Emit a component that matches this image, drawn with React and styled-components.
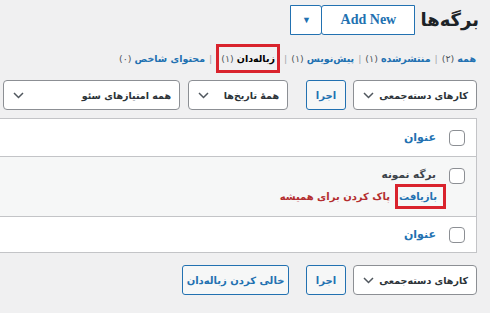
import React from 'react';
import styled, { createGlobalStyle } from 'styled-components';

const GlobalStyle = createGlobalStyle`
    html, body {
        margin: 0;
        padding: 0;
        background: #f0f0f1;
    }
    body {
        direction: rtl;
        font-family: "DejaVu Sans", sans-serif;
        font-size: 11px;
        color: #3c434a;
        overflow: hidden;
    }
`;

const Wrap = styled.div`
    width: 490px;
    height: 313px;
    padding: 5px 13px 0 0;
    box-sizing: border-box;
`;

const HeadRow = styled.div`
    display: flex;
    align-items: center;
    gap: 5px;
    height: 30px;
`;

const Title = styled.h1`
    margin: 0 -2px 0 0;
    font-size: 18px;
    font-weight: bold;
    color: #1d2327;
    line-height: 30px;
`;

const SplitButton = styled.div`
    display: flex;
    height: 30px;
`;

const AddNew = styled.button`
    width: 94px;
    height: 30px;
    box-sizing: border-box;
    border: 1px solid #2271b1;
    border-radius: 3px 0 0 3px;
    background: #fff;
    color: #2271b1;
    font-family: "Liberation Serif", serif;
    font-weight: bold;
    font-size: 14px;
    direction: ltr;
    padding: 0;
    text-align: center;
`;

const Toggle = styled.button`
    width: 32px;
    height: 30px;
    box-sizing: border-box;
    border: 1px solid #2271b1;
    border-radius: 0 3px 3px 0;
    margin-right: -1px;
    background: #fff;
    color: #2271b1;
    font-size: 9px;
    padding: 0;
    display: flex;
    align-items: center;
    justify-content: center;
`;

const Views = styled.ul`
    list-style: none;
    margin: 9px 1px 0 0;
    padding: 0;
    display: flex;
    align-items: center;
    height: 28px;
    font-size: 9.5px;
`;

const ViewItem = styled.li`
    display: flex;
    align-items: center;
    white-space: nowrap;
`;

const ViewLink = styled.span`
    color: ${p => (p.$current ? '#000' : '#2271b1')};
    font-weight: bold;
    display: inline-flex;
    align-items: center;
    ${p => p.$current && `
        border: 3px solid #d9232d;
        padding: 0 2px 0 2px;
        height: 23px;
    `}
`;

const Count = styled.span`
    color: #50575e;
    font-weight: normal;
    margin-right: 3px;
`;

const Sep = styled.span`
    color: #a7aaad;
    font-weight: normal;
    margin: 0 4px;
`;

const TableNav = styled.div`
    display: flex;
    align-items: center;
    height: 30px;
    margin-top: ${p => p.$top}px;
`;

const Select = styled.div`
    flex: none;
    width: ${p => p.$w}px;
    height: 30px;
    box-sizing: border-box;
    border: 1px solid #8c8f94;
    border-radius: 4px;
    background: #fff;
    display: flex;
    align-items: center;
    justify-content: space-between;
    padding: 0 8px 0 9px;
    margin-left: ${p => p.$ml || 0}px;
    font-size: 9.5px;
    font-weight: bold;
    color: #2c3338;
    white-space: nowrap;
    overflow: hidden;
`;

const Button = styled.button`
    flex: none;
    height: 30px;
    box-sizing: border-box;
    border: 1px solid #2271b1;
    border-radius: 3px;
    background: #f6f7f7;
    color: #2271b1;
    font-family: "DejaVu Sans", sans-serif;
    font-size: 10px;
    font-weight: bold;
    padding: 0;
    width: ${p => p.$w}px;
    margin-left: ${p => p.$ml || 0}px;
    white-space: nowrap;
`;

const Table = styled.div`
    margin-top: 8px;
    margin-left: -2px;
    width: 479px;
    box-sizing: border-box;
    border: 1px solid #c3c4c7;
    border-left: 0;
    background: #fff;
`;

const Row = styled.div`
    display: flex;
    align-items: ${p => (p.$tall ? 'flex-start' : 'center')};
    height: ${p => p.$h}px;
    box-sizing: border-box;
    border-top: ${p => (p.$first ? '0' : '1px solid #c3c4c7')};
    background: ${p => (p.$alt ? '#f6f7f7' : '#fff')};
    padding-right: 11px;
    padding-top: ${p => (p.$tall ? 11 : 0)}px;
`;

const Check = styled.span`
    width: 16px;
    height: 16px;
    box-sizing: border-box;
    border: 1px solid #8c8f94;
    border-radius: 4px;
    background: #fff;
    flex: none;
`;

const Cell = styled.div`
    margin-right: 13px;
    display: flex;
    flex-direction: column;
    align-items: flex-start;
`;

const HeadLink = styled.span`
    color: #2271b1;
    font-weight: bold;
    font-size: 11px;
`;

const PostTitle = styled.span`
    color: #3c434a;
    font-weight: bold;
    font-size: 10.5px;
`;

const Actions = styled.div`
    display: flex;
    align-items: center;
    margin-top: 4px;
    margin-right: -10px;
    font-weight: bold;
    font-size: 10px;
`;

const Restore = styled.span`
    color: #2271b1;
    border: 3px solid #d9232d;
    padding: 0 6px 0 1px;
    height: 19px;
    display: inline-flex;
    align-items: center;
`;

const Delete = styled.span`
    color: #b32d2e;
    margin-right: 5px;
`;

const Chevron = () => (
    <svg width="11" height="7" viewBox="0 0 11 7">
        <path d="M1 1l4.5 4.5L10 1" fill="none" stroke="#50575e" strokeWidth="1.5" />
    </svg>
);

const views = [
    { label: 'همه', count: '۲' },
    { label: 'منتشرشده', count: '۱' },
    { label: 'پیش‌نویس', count: '۱' },
    { label: 'زباله‌دان', count: '۱', current: true },
    { label: 'محتوای شاخص', count: '۰' },
];

export default function App() {
    return (
        <>
            <GlobalStyle />
            <Wrap>
                <HeadRow>
                    <Title>برگه‌ها</Title>
                    <SplitButton>
                        <AddNew>Add New</AddNew>
                        <Toggle>▼</Toggle>
                    </SplitButton>
                </HeadRow>

                <Views>
                    {views.map((v, i) => (
                        <ViewItem key={v.label}>
                            {i > 0 && <Sep>|</Sep>}
                            <ViewLink $current={v.current}>
                                {v.label}
                                <Count>({v.count})</Count>
                            </ViewLink>
                        </ViewItem>
                    ))}
                </Views>

                <TableNav $top={8}>
                    <Select $w={124} $ml={7}>کارهای دسته‌جمعی<Chevron /></Select>
                    <Button $w={40} $ml={18}>اجرا</Button>
                    <Select $w={100} $ml={8}>همهٔ تاریخ‌ها<Chevron /></Select>
                    <Select $w={177}>همه امتیازهای سئو<Chevron /></Select>
                </TableNav>

                <Table>
                    <Row $h={37} $first>
                        <Check />
                        <Cell><HeadLink>عنوان</HeadLink></Cell>
                    </Row>
                    <Row $h={60} $alt $tall>
                        <Check />
                        <Cell>
                            <PostTitle>برگه نمونه</PostTitle>
                            <Actions>
                                <Restore>بازیافت</Restore>
                                <Delete>پاک کردن برای همیشه</Delete>
                            </Actions>
                        </Cell>
                    </Row>
                    <Row $h={36}>
                        <Check />
                        <Cell><HeadLink>عنوان</HeadLink></Cell>
                    </Row>
                </Table>

                <TableNav $top={12}>
                    <Select $w={124} $ml={7}>کارهای دسته‌جمعی<Chevron /></Select>
                    <Button $w={40} $ml={17}>اجرا</Button>
                    <Button $w={107}>خالی کردن زباله‌دان</Button>
                </TableNav>
            </Wrap>
        </>
    );
}
